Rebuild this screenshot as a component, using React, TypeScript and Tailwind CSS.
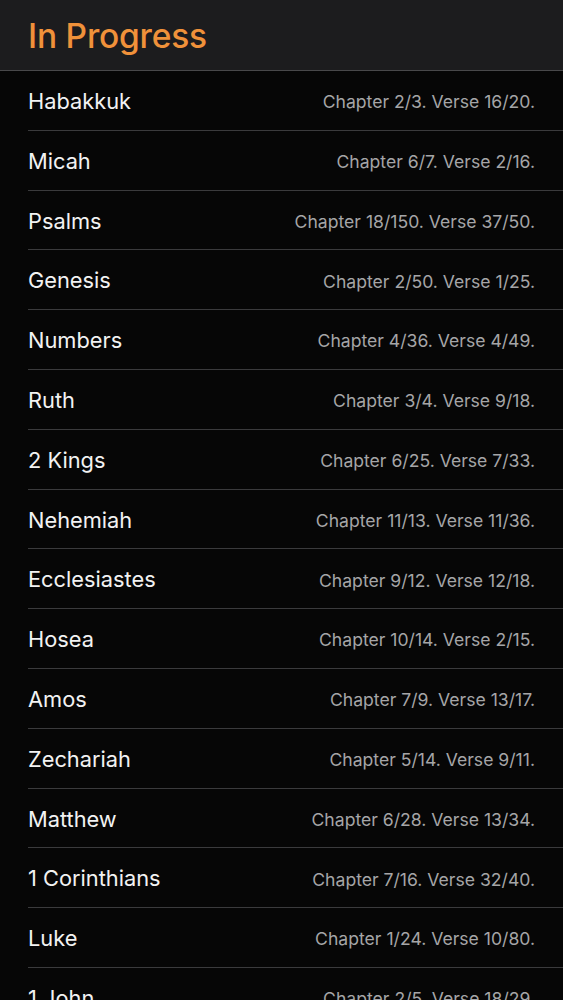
const rows: [string, string][] = [
  ["Habakkuk", "Chapter 2/3. Verse 16/20."],
  ["Micah", "Chapter 6/7. Verse 2/16."],
  ["Psalms", "Chapter 18/150. Verse 37/50."],
  ["Genesis", "Chapter 2/50. Verse 1/25."],
  ["Numbers", "Chapter 4/36. Verse 4/49."],
  ["Ruth", "Chapter 3/4. Verse 9/18."],
  ["2 Kings", "Chapter 6/25. Verse 7/33."],
  ["Nehemiah", "Chapter 11/13. Verse 11/36."],
  ["Ecclesiastes", "Chapter 9/12. Verse 12/18."],
  ["Hosea", "Chapter 10/14. Verse 2/15."],
  ["Amos", "Chapter 7/9. Verse 13/17."],
  ["Zechariah", "Chapter 5/14. Verse 9/11."],
  ["Matthew", "Chapter 6/28. Verse 13/34."],
  ["1 Corinthians", "Chapter 7/16. Verse 32/40."],
  ["Luke", "Chapter 1/24. Verse 10/80."],
  ["1 John", "Chapter 2/5. Verse 18/29."],
];

export default function App() {
  return (
    <div className="h-[1000px] overflow-hidden bg-[#060606] font-['Inter',sans-serif]">
      <header className="flex h-[71px] items-center border-b border-[#48484a] bg-[#1c1c1e] px-7 pt-[2px]">
        <h1 className="text-[33.5px] font-medium tracking-[-0.2px] text-[#f0913a]">In Progress</h1>
      </header>
      <ul>
        {rows.map(([book, progress]) => (
          <li key={book} className="pl-7">
            <div className="flex h-[59.8px] items-center justify-between border-b border-[#3a3a3c] pt-[2px] pr-7">
              <span className="text-[21.8px] text-[#f2f2f2]">{book}</span>
              <span className="pt-[2px] text-[17.6px] text-[#a5a5a7]">{progress}</span>
            </div>
          </li>
        ))}
      </ul>
    </div>
  );
}
